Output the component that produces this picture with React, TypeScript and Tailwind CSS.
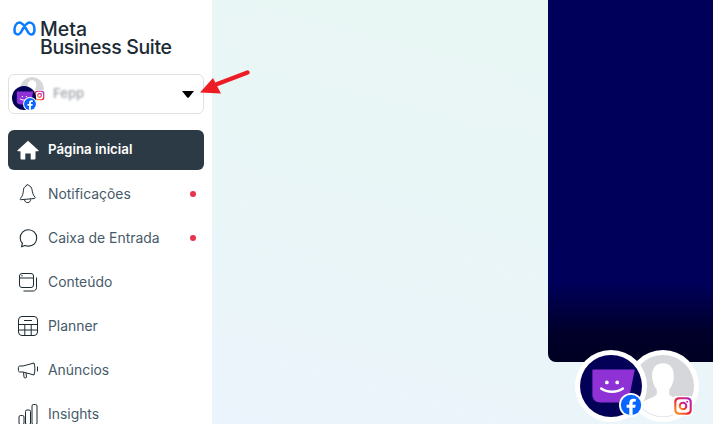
const FONT = "font-['Inter','Noto_Sans',sans-serif]"

const FacebookBadge = ({ size }: { size: number }) => (
  <svg width={size} height={size} viewBox="0 0 24 24" className="block">
    <circle cx="12" cy="12" r="12" fill="#fff" />
    <circle cx="12" cy="12" r="10.2" fill="#0866ff" />
    <path d="M13.6 22.2v-7.4h2.6l.5-3h-3.1v-1.4c0-1.2.5-1.9 1.9-1.9h1.3V5.900c-.7-.1-1.5-.2-2.3-.2-2.6 0-4.2 1.5-4.2 4.3v1.800H7.600v3h2.700v7.200z" fill="#fff" />
  </svg>
)

const InstagramBadge = ({ size, id }: { size: number; id: string }) => (
  <svg width={size} height={size} viewBox="0 0 24 24" className="block">
    <defs>
      <linearGradient id={id} x1="0" y1="1" x2="1" y2="0">
        <stop offset="0" stopColor="#fdb32b" />
        <stop offset="0.45" stopColor="#f3262f" />
        <stop offset="0.8" stopColor="#c91f9e" />
        <stop offset="1" stopColor="#7a35d8" />
      </linearGradient>
    </defs>
    <rect x="0" y="0" width="24" height="24" rx="4" fill="#fff" />
    <rect x="1.500" y="1.500" width="21" height="21" rx="5.500" fill={`url(#${id})`} />
    <rect x="4" y="4" width="16" height="16" rx="4" fill="#fff" />
    <circle cx="12" cy="12" r="4" fill="none" stroke={`url(#${id})`} strokeWidth="2.400" />
    <circle cx="17" cy="7" r="1.200" fill="#d3218f" />
  </svg>
)

const PersonAvatar = () => (
  <svg viewBox="0 0 60 60" className="block h-full w-full">
    <circle cx="30" cy="30" r="30" fill="#d5d7da" />
    <path d="M30 8c-7 0-10.500 5-10.500 12 0 5 1.500 10 4.500 13.500v5c-3 3-14 5-16 10-.5 2 9 11 22 11s22.500-9 22-11c-2-5-13-7-16-10v-5c3-3.500 4.500-8.500 4.500-13.500 0-7-3.500-12-10.500-12z" fill="#fff" />
  </svg>
)

const BrandAvatar = () => (
  <svg viewBox="0 0 60 60" className="block h-full w-full">
    <circle cx="30" cy="30" r="30" fill="#030058" />
    <path d="M13 14h40l-6 30c-.3 1.500-1.500 2-3 2H20c-5 0-8-3-8-7V15c0-.6.400-1 1-1z" fill="#8e32d6" />
    <circle cx="26" cy="26.500" r="1.800" fill="#fff" />
    <circle cx="36" cy="26.500" r="1.800" fill="#fff" />
    <path d="M20.500 32.500c5.500 4 15.500 4 21 0" fill="none" stroke="#fff" strokeWidth="2.400" strokeLinecap="round" />
  </svg>
)

const HomeIcon = () => (
  <svg width="22" height="22" viewBox="0 0 22 22" fill="#fff">
    <path d="M11 1.800.6 11.300c-.4.400-.1 1 .4 1h2.500v7.200c0 .5.400.9.900.9h3.900v-6h5.400v6h3.900c.5 0 .9-.4.900-.9v-7.200H21c.5 0 .8-.6.400-1z" />
  </svg>
)

const BellIcon = () => (
  <svg width="22" height="22" viewBox="0 0 22 22" fill="none" stroke="#1c2b33" strokeWidth="1" strokeLinejoin="round">
    <path d="M10.500 1.500c-.8.100-1.300.8-1.300 1.500-1.800.8-2.700 2.300-2.800 4.500-.2 3.200-.9 5.500-3 8-.5.600-.2 1.300.5 1.200l13.500-1.200c.8-.1 1-.8.500-1.400-1.900-2.200-2.400-4.500-2.900-7.500-.4-2.200-1.500-3.500-3.200-4-.2-.8-.8-.9-1.300-.6z" />
    <path d="M7.500 16.800c.3 1.800 1.700 3 3.400 2.800 1.600-.1 2.800-1.500 2.700-3.300" />
  </svg>
)

const ChatIcon = () => (
  <svg width="22" height="22" viewBox="0 0 22 22" fill="none" stroke="#1c2b33" strokeWidth="1.100" strokeLinejoin="round">
    <path d="M11.500 2.800c-4.800 0-8.300 3.500-8.300 8.200 0 2.200.8 4.100 2.200 5.500l-.9 3.300 3.500-1.400c1 .4 2.200.7 3.500.7 4.800 0 8.200-3.500 8.200-8.100s-3.400-8.200-8.200-8.200z" />
  </svg>
)

const ContentIcon = () => (
  <svg width="22" height="22" viewBox="0 0 22 22" fill="none" stroke="#1c2b33" strokeWidth="1">
    <rect x="2.500" y="2.500" width="14" height="14" rx="2.500" />
    <path d="M2.500 7h14" />
    <circle cx="5" cy="4.800" r=".7" fill="#1c2b33" stroke="none" />
    <path d="M19.500 6.500v10c0 2-1.300 3.500-3.300 3.500H6.500" />
  </svg>
)

const PlannerIcon = () => (
  <svg width="22" height="22" viewBox="0 0 22 22" fill="none" stroke="#1c2b33" strokeWidth="1">
    <rect x="1.500" y="1.500" width="19" height="19" rx="3.500" />
    <path d="M7 5.500h8M1.500 9.500h19M1.500 15h19M7.800 9.500v11M14.200 9.500v11" />
  </svg>
)

const MegaphoneIcon = () => (
  <svg width="22" height="22" viewBox="0 0 22 22" fill="none" stroke="#1c2b33" strokeWidth="1" strokeLinejoin="round">
    <path d="M17 4 6 7H3c-1 0-1.600.7-1.600 1.500v3c0 .9.600 1.500 1.600 1.500h3l11 3c.6-2 .9-3.800.9-6s-.3-4-.9-6z" />
    <path d="M6.500 13.300 7 18c0 .6.400.8.800.8h1c.5 0 .8-.4.700-.9L9 14" />
    <path d="M20.500 8v4" strokeLinecap="round" />
  </svg>
)

const InsightsIcon = () => (
  <svg width="22" height="22" viewBox="0 0 22 22" fill="none" stroke="#1c2b33" strokeWidth="1">
    <rect x="2" y="12.500" width="5" height="9" rx="1.500" />
    <rect x="8.500" y="7" width="5" height="14.500" rx="1.500" />
    <rect x="15" y="1.500" width="5" height="20" rx="1.500" />
  </svg>
)

const navItems = [
  { label: 'Notificações', icon: <BellIcon />, dot: true },
  { label: 'Caixa de Entrada', icon: <ChatIcon />, dot: true },
  { label: 'Conteúdo', icon: <ContentIcon />, dot: false },
  { label: 'Planner', icon: <PlannerIcon />, dot: false },
  { label: 'Anúncios', icon: <MegaphoneIcon />, dot: false },
  { label: 'Insights', icon: <InsightsIcon />, dot: false },
]

const App = () => {
  return (
    <div className={`relative flex h-[424px] w-[713px] overflow-hidden bg-white ${FONT}`}>
      <aside className="flex w-[212px] shrink-0 flex-col bg-white px-2">
        <div className="flex h-[74px] shrink-0 items-start gap-1 pl-[5px] pt-5">
          <svg width="23" height="15" viewBox="0 0 23 15" fill="none" stroke="#0a7cff" strokeWidth="2.600" className="mt-[1px] shrink-0">
            <path d="M1.500 9.500C1.500 5 3.500 1.500 6.500 1.500c3 0 5 3.500 7 7 1.500 3 2.800 5 4.500 5 2.200 0 3.500-2 3.500-5 0-4-2-7-5-7-3 0-5 3.500-7 7-1.500 3-2.800 5-4.500 5-2 0-3.500-1.500-3.500-4z" />
          </svg>
          <div className="text-[#1c2b33]">
            <div className="text-[19.5px] font-medium leading-[18px]">Meta</div>
            <div className="text-[19.5px] font-medium leading-[18px] tracking-[-0.35px]">Business Suite</div>
          </div>
        </div>

        <button className="flex h-10 w-[196px] shrink-0 items-center rounded-md border border-[#dfe1e3] bg-white">
          <div className="relative h-10 w-[44px] shrink-0">
            <div className="absolute left-[11px] top-[3px] h-[24px] w-[24px] overflow-hidden rounded-full">
              <PersonAvatar />
            </div>
            <div className="absolute left-[25px] top-[16px]">
              <InstagramBadge size={11} id="ig-small" />
            </div>
            <div className="absolute left-[3px] top-[12px] h-[24px] w-[24px]">
              <BrandAvatar />
            </div>
            <div className="absolute left-[14px] top-[23px]">
              <FacebookBadge size={14} />
            </div>
          </div>
          <span className="text-[13px] font-semibold text-[#a9aeb3] blur-[1px]">Fepp</span>
          <svg width="12" height="7" viewBox="0 0 12 7" className="ml-auto mr-[9px]">
            <path d="M0 0h12L6.800 6.400c-.4.500-1.200.500-1.600 0z" fill="#000" />
          </svg>
        </button>

        <nav className="mt-4 flex shrink-0 flex-col gap-1">
          <div className="flex h-10 items-center gap-[9px] rounded-md bg-[#2b3a44] px-[9px] text-[13.3px] font-semibold text-white">
            <HomeIcon />
            <span>Página inicial</span>
          </div>
          {navItems.map((item) => (
            <div key={item.label} className="flex h-10 items-center gap-[9px] px-[9px] text-[13.9px] text-[#465a69]">
              {item.icon}
              <span>{item.label}</span>
              {item.dot && <span className="ml-auto mr-[-1px] h-[6px] w-[6px] rounded-full bg-[#e4344b]" />}
            </div>
          ))}
        </nav>
      </aside>

      <main className="relative flex-1 bg-[linear-gradient(195deg,#e8f6f3_0%,#e9f6f6_45%,#ebf4fc_100%)]">
        <div className="ml-[336px] h-[362px] w-[165px] rounded-bl-lg bg-[linear-gradient(to_bottom,#00005a_0%,#00005a_78%,#00002a_92%,#000022_100%)]" />

        {/* avatares sobrepostos ao painel */}
        <div className="absolute left-[415px] top-[350px] h-[72px] w-[72px] rounded-full border-[5px] border-white bg-white">
          <PersonAvatar />
        </div>
        <div className="absolute left-[461px] top-[396px]">
          <InstagramBadge size={20} id="ig-large" />
        </div>
        <div className="absolute left-[363px] top-[350px] h-[72px] w-[72px] rounded-full border-[5px] border-white bg-white">
          <BrandAvatar />
        </div>
        <div className="absolute left-[407px] top-[393px]">
          <FacebookBadge size={24} />
        </div>
      </main>

      {/* seta vermelha da anotação */}
      <svg width="54" height="28" viewBox="0 0 54 28" className="absolute left-[198px] top-[69px]">
        <path d="M49.500 3.500 18 15.500" stroke="#ee1c25" strokeWidth="4.500" strokeLinecap="round" />
        <path d="M2 23.500 15 9l4 8 4 7.500z" fill="#ee1c25" />
      </svg>
    </div>
  )
}

export default App
